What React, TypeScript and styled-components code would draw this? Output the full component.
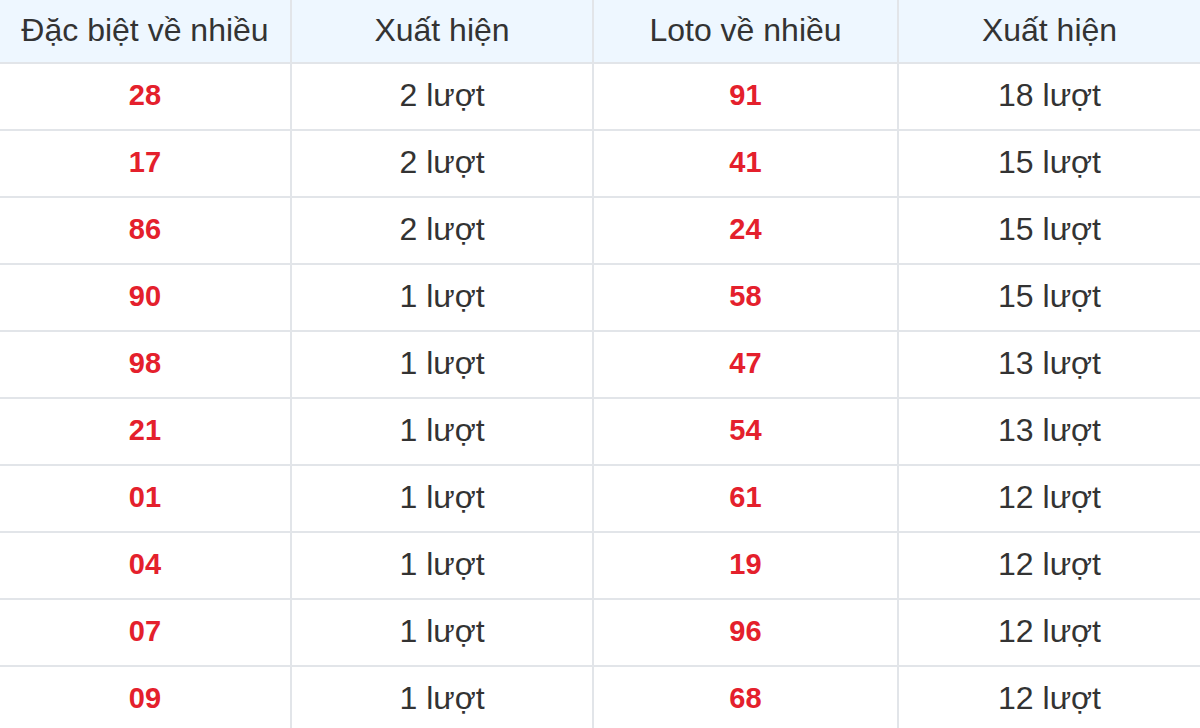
import React from "react";
import styled, { createGlobalStyle } from "styled-components";

const Global = createGlobalStyle`
  html, body { margin: 0; padding: 0; background: #ffffff; }
  body { font-family: "Liberation Sans", Arial, sans-serif; }
`;

const Table = styled.div`
  width: 1200px;
  display: grid;
  grid-template-columns: 292px 302px 305px 1fr;
  font-family: "Liberation Sans", Arial, sans-serif;
  font-size: 32px;
  color: #333333;
`;

const Cell = styled.div<{ $head?: boolean; $last?: boolean }>`
  box-sizing: border-box;
  height: ${(p) => (p.$head ? "64px" : "67px")};
  display: flex;
  align-items: center;
  justify-content: center;
  background: ${(p) => (p.$head ? "#eef7ff" : "#ffffff")};
  border-bottom: 2px solid #e2e5e9;
  border-right: ${(p) => (p.$last ? "none" : "2px solid #e2e5e9")};
  white-space: nowrap;
  padding-bottom: 2px;
`;

const Num = styled.span`
  color: #e4202c;
  font-weight: 700;
  font-size: 29px;
`;

const headers = ["Đặc biệt về nhiều", "Xuất hiện", "Loto về nhiều", "Xuất hiện"];

const rows: [string, number, string, number][] = [
  ["28", 2, "91", 18],
  ["17", 2, "41", 15],
  ["86", 2, "24", 15],
  ["90", 1, "58", 15],
  ["98", 1, "47", 13],
  ["21", 1, "54", 13],
  ["01", 1, "61", 12],
  ["04", 1, "19", 12],
  ["07", 1, "96", 12],
  ["09", 1, "68", 12],
];

export default function App() {
  return (
    <>
      <Global />
      <Table>
        {headers.map((h, i) => (
          <Cell key={"h" + i} $head $last={i === 3}>
            {h}
          </Cell>
        ))}
        {rows.map(([a, b, c, d], r) => (
          <React.Fragment key={r}>
            <Cell>
              <Num>{a}</Num>
            </Cell>
            <Cell>{b} lượt</Cell>
            <Cell>
              <Num>{c}</Num>
            </Cell>
            <Cell $last>{d} lượt</Cell>
          </React.Fragment>
        ))}
      </Table>
    </>
  );
}
